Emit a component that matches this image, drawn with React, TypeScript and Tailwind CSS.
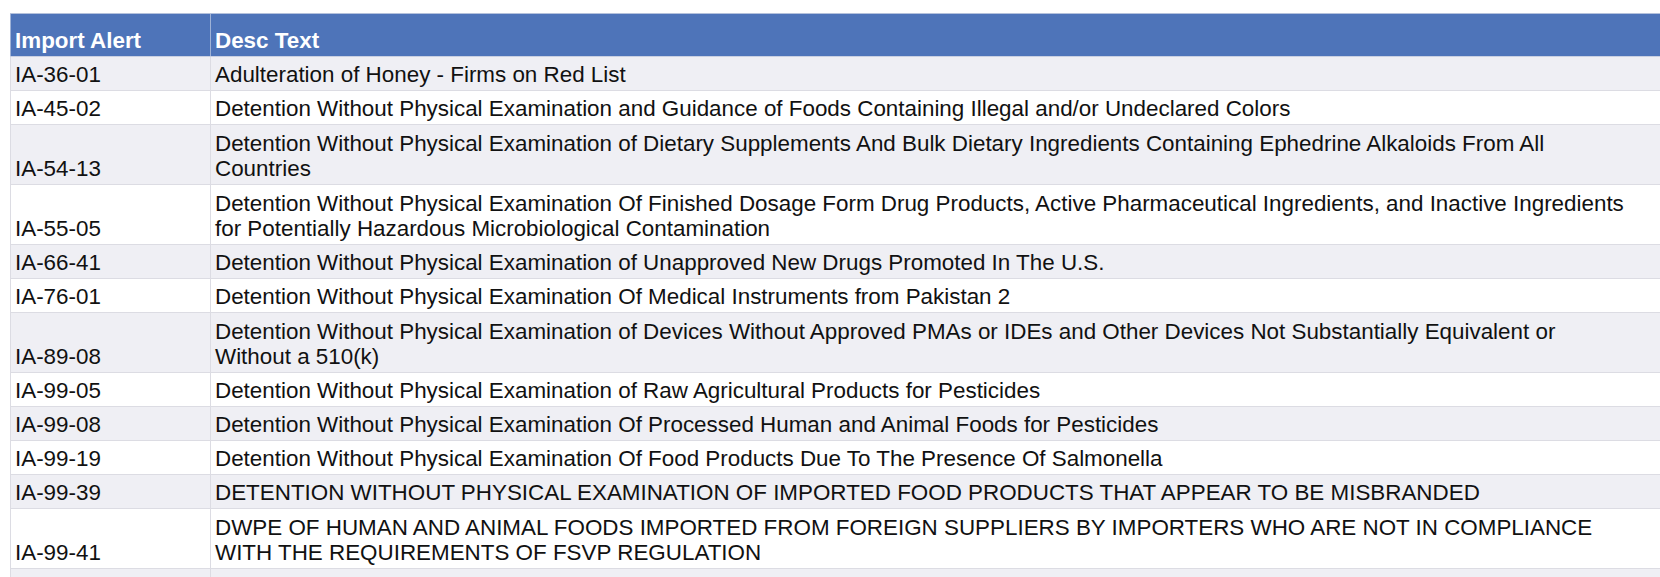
import React from 'react';

interface AlertRow {
  id: string;
  lines: string[];
}

const rows: AlertRow[] = [
  { id: 'IA-36-01', lines: ['Adulteration of Honey - Firms on Red List'] },
  {
    id: 'IA-45-02',
    lines: ['Detention Without Physical Examination and Guidance of Foods Containing Illegal and/or Undeclared Colors'],
  },
  {
    id: 'IA-54-13',
    lines: [
      'Detention Without Physical Examination of Dietary Supplements And Bulk Dietary Ingredients Containing Ephedrine Alkaloids From All',
      'Countries',
    ],
  },
  {
    id: 'IA-55-05',
    lines: [
      'Detention Without Physical Examination Of Finished Dosage Form Drug Products, Active Pharmaceutical Ingredients, and Inactive Ingredients',
      'for Potentially Hazardous Microbiological Contamination',
    ],
  },
  { id: 'IA-66-41', lines: ['Detention Without Physical Examination of Unapproved New Drugs Promoted In The U.S.'] },
  { id: 'IA-76-01', lines: ['Detention Without Physical Examination Of Medical Instruments from Pakistan 2'] },
  {
    id: 'IA-89-08',
    lines: [
      'Detention Without Physical Examination of Devices Without Approved PMAs or IDEs and Other Devices Not Substantially Equivalent or',
      'Without a 510(k)',
    ],
  },
  { id: 'IA-99-05', lines: ['Detention Without Physical Examination of Raw Agricultural Products for Pesticides'] },
  { id: 'IA-99-08', lines: ['Detention Without Physical Examination Of Processed Human and Animal Foods for Pesticides'] },
  { id: 'IA-99-19', lines: ['Detention Without Physical Examination Of Food Products Due To The Presence Of Salmonella'] },
  {
    id: 'IA-99-39',
    lines: ['DETENTION WITHOUT PHYSICAL EXAMINATION OF IMPORTED FOOD PRODUCTS THAT APPEAR TO BE MISBRANDED'],
  },
  {
    id: 'IA-99-41',
    lines: [
      'DWPE OF HUMAN AND ANIMAL FOODS IMPORTED FROM FOREIGN SUPPLIERS BY IMPORTERS WHO ARE NOT IN COMPLIANCE',
      'WITH THE REQUIREMENTS OF FSVP REGULATION',
    ],
  },
];

function Row({ row, striped }: { row: AlertRow; striped: boolean }) {
  const tall = row.lines.length > 1;
  return (
    <div
      className={`flex border-b border-[#dcdce3] ${tall ? 'h-[60px]' : 'h-[34px]'} ${
        striped ? 'bg-[#efeff4]' : 'bg-white'
      }`}
    >
      <div className="w-[201px] shrink-0 border-l border-r border-[#dcdce3] flex items-end px-[4px] pb-[3px] leading-[25px]">
        {row.id}
      </div>
      <div className="flex-1 flex flex-col justify-end px-[4px] pb-[3px] leading-[25px] whitespace-nowrap">
        {row.lines.map((line) => (
          <div key={line}>{line}</div>
        ))}
      </div>
    </div>
  );
}

export default function App() {
  return (
    <div
      className="w-[1660px] h-[577px] overflow-hidden bg-white pt-[13px] pl-[10px] text-[22.4px] text-[#111]"
      style={{ fontFamily: '"Liberation Sans", Arial, sans-serif' }}
    >
      <div className="flex h-[44px] bg-[#4e74b9] border-t border-[#b4c1dc] border-b border-b-[#c9d0e2] text-white font-bold">
        <div className="w-[201px] shrink-0 border-l border-r border-[#9fb2d6] flex items-end px-[4px] pb-[3px] leading-[25px]">
          Import Alert
        </div>
        <div className="flex-1 flex items-end px-[4px] pb-[3px] leading-[25px]">Desc Text</div>
      </div>
      {rows.map((row, i) => (
        <Row key={row.id} row={row} striped={i % 2 === 0} />
      ))}
      <div className="flex h-[40px] bg-[#efeff4]">
        <div className="w-[201px] shrink-0 border-l border-r border-[#dcdce3]" />
        <div className="flex-1" />
      </div>
    </div>
  );
}
